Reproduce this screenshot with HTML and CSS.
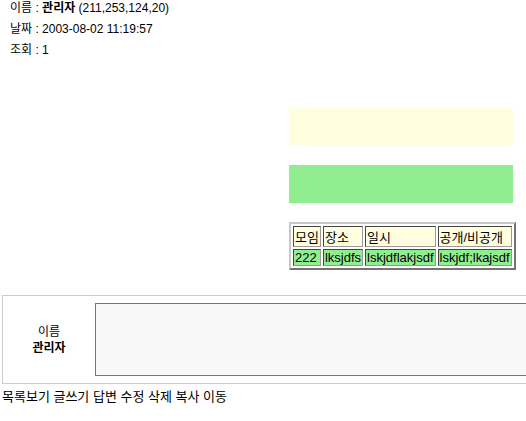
FILE: index.html
```html
<!DOCTYPE html>
<html lang="ko">
<head>
    <meta charset="UTF-8">
    <meta name="viewport" content="width=device-width, initial-scale=1.0">
    <title>게시판 보기</title>
    <link rel="stylesheet" href="styles.css">
</head>
<body>

    <div class="info">
        <div>이름 : <b>관리자</b> (211,253,124,20)</div>
        <div>날짜 : 2003-08-02 11:19:57</div>
        <div>조회 : 1</div>
    </div>

    <div class="panel">
        <div class="box yellow"></div>
        <div class="box green"></div>
        <table class="meet">
            <tr>
                <th>모임</th>
                <th>장소</th>
                <th>일시</th>
                <th>공개/비공개</th>
            </tr>
            <tr>
                <td>222</td>
                <td>lksjdfs</td>
                <td>lskjdflakjsdf</td>
                <td>lskjdf;lkajsdf</td>
            </tr>
        </table>
    </div>

    <div class="comment">
        <div class="writer">
            이름<br>
            <b>관리자</b>
        </div>
        <textarea class="memo"></textarea>
    </div>

    <div class="menu">목록보기 글쓰기 답변 수정 삭제 복사 이동</div>

</body>
</html>
```

FILE: styles.css
```css
body {
    margin: 0;
    font-family: "Liberation Sans", "Noto Sans CJK KR", sans-serif;
    font-size: 12px;
    color: #000;
    background: #fff;
    overflow-x: hidden;
}
.info {
    padding-left: 10px;
    line-height: 21px;
    margin-top: -2px;
}
.panel {
    margin: 47px 0 0 289px;
    width: 224px;
}
.box {
    height: 38px;
}
.yellow {
    background: #ffffe0;
}
.green {
    background: #90ee90;
    margin-top: 19px;
}
.meet {
    margin-top: 19px;
    width: 224px;
    height: 44px;
    border: 2px outset #c8c8c8;
    border-spacing: 2px;
    font-size: 13px;
}
.meet th,
.meet td {
    border: 1px inset #999;
    padding: 0 1px;
    text-align: left;
    font-weight: normal;
    white-space: nowrap;
}
.meet th {
    background: #ffffe0;
}
.meet td {
    background: #90ee90;
}
.comment {
    display: flex;
    margin: 25px 0 0 2px;
    width: 640px;
    height: 87px;
    border: 1px solid #ccc;
}
.writer {
    width: 92px;
    display: flex;
    flex-direction: column;
    justify-content: center;
    align-items: center;
    text-align: center;
    line-height: 16px;
}
.memo {
    margin-top: 7px;
    width: 540px;
    height: 73px;
    box-sizing: border-box;
    border: 1px solid #777;
    background: #f8f8f8;
    resize: none;
    padding: 0;
}
.menu {
    margin: 2px 0 0 2px;
    font-size: 13px;
}
```
